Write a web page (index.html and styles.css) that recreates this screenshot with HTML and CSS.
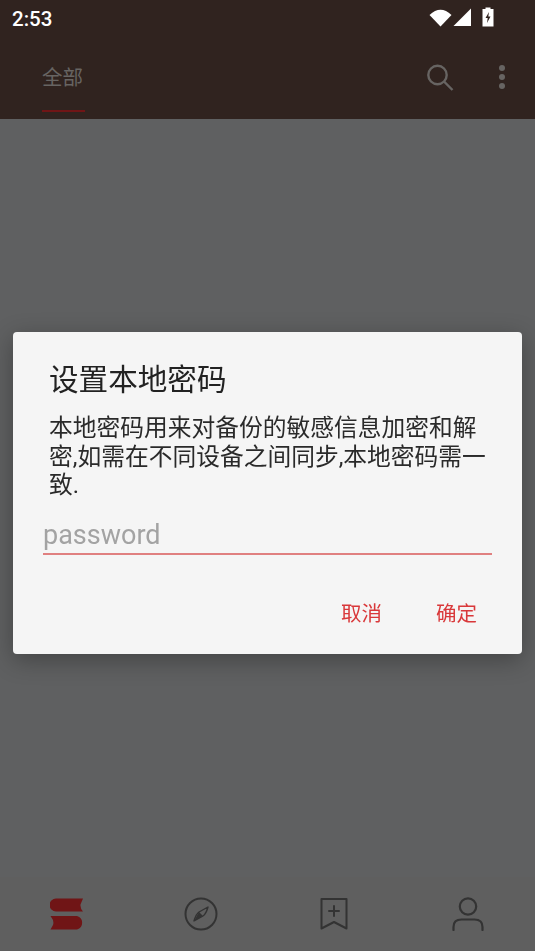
FILE: index.html
```html
<!DOCTYPE html>
<html lang="zh-CN">

<head>
    <meta charset="UTF-8">
    <meta name="viewport" content="width=device-width, initial-scale=1.0">
    <title>设置本地密码</title>
    <link rel="stylesheet" href="styles.css">
</head>
<body>
    <div class="app">
        <header class="app-header">
            <div class="status-bar">
                <span class="clock">2:53</span>
                <div class="status-icons">
                    <svg class="icon-wifi" width="23" height="19" viewBox="0 0 23 19"><path d="M0.5 7 Q11.5 -3.5 22.5 7 L11.5 18.5 Z" fill="#fff"/></svg>
                    <svg class="icon-signal" width="19" height="19" viewBox="0 0 19 19"><path d="M18 0.5 V18 H0.5 Z" fill="#fff"/></svg>
                    <svg class="icon-battery" width="12" height="20" viewBox="0 0 12 20"><path d="M3.5 0.5 H8.5 V2 H11.5 V19.5 H0.5 V2 H3.5 Z" fill="#fff"/><path d="M7 5 L3.5 11 H5.7 L5 16 L8.5 9.5 H6.3 Z" fill="#30231f"/></svg>
                </div>
            </div>
            <div class="toolbar">
                <div class="tab">
                    <span class="tab-label">全部</span>
                    <span class="tab-line"></span>
                </div>
                <div class="toolbar-actions">
                    <svg width="28" height="28" viewBox="0 0 28 28" fill="none" stroke="#676462" stroke-width="2.4"><circle cx="11.5" cy="11" r="9.2"/><path d="M18 17.5 L26.5 26"/></svg>
                    <div class="more-dots"><i></i><i></i><i></i></div>
                </div>
            </div>
        </header>
        <main class="content"></main>
        <nav class="bottom-nav">
            <svg width="34" height="32" viewBox="0 0 34 32"><path d="M6 0.5 H33 L30.5 6.5 Q30 10 33 13.5 H6 A6.5 6.5 0 0 1 6 0.5 Z M0.5 18 H27 A7 7 0 0 1 27 31.5 H0.5 L3 27 Q4.5 23 0.5 18 Z" fill="#701516"/></svg>
            <svg width="34" height="34" viewBox="0 0 34 34" fill="none" stroke="#333" stroke-width="2"><circle cx="17" cy="17" r="15.5"/><path d="M24 10 Q22 17 19 19 L10 24 Q12 17 15 15 Z" stroke-width="1.4" stroke-linejoin="round"/><path d="M15 15 L19 19 L10 24 Z" fill="#333" stroke="none"/></svg>
            <svg width="28" height="32" viewBox="0 0 28 32" fill="none" stroke="#333" stroke-width="2" stroke-linejoin="round" stroke-linecap="round"><path d="M1.5 1 H26.5 V30.5 L14 24 L1.5 30.5 Z"/><path d="M14 8 V18 M9 13 H19"/></svg>
            <svg width="32" height="34" viewBox="0 0 32 34" fill="none" stroke="#333" stroke-width="2.2" stroke-linecap="round"><circle cx="16" cy="9.5" r="8.2"/><path d="M1.5 33 V30 Q1.5 22.5 9.5 22.5 H22.5 Q30.5 22.5 30.5 30 V33"/></svg>
        </nav>
    </div>

    <div class="overlay">
        <div class="dialog">
            <h2 class="dialog-title">设置本地密码</h2>
            <p class="dialog-text">本地密码用来对备份的敏感信息加密和解密,如需在不同设备之间同步,本地密码需一致.</p>
            <input class="dialog-input" type="text" placeholder="password">
            <div class="dialog-buttons">
                <button>取消</button>
                <button>确定</button>
            </div>
        </div>
    </div>
</body>
</html>
```

FILE: styles.css
```css
* {
    box-sizing: border-box;
}

html, body {
    margin: 0;
    height: 100%;
}

body {
    font-family: "Roboto", "Noto Sans CJK SC", sans-serif;
    background-color: #5f6061;
    overflow: hidden;
}

.app {
    height: 951px;
    display: flex;
    flex-direction: column;
}

.app-header {
    background-color: #30231f;
    height: 119px;
}

.status-bar {
    height: 38px;
    padding: 7px 41px 0 12px;
    display: flex;
    justify-content: space-between;
}

.clock {
    color: #fff;
    font-size: 20.5px;
    font-weight: 500;
    line-height: 24px;
}

.status-icons {
    display: flex;
    align-items: flex-start;
    padding-top: 1px;
}

.icon-signal {
    margin-left: 1px;
}

.icon-battery {
    margin-left: 10px;
    margin-top: -1px;
}

.toolbar {
    height: 81px;
    padding-left: 41px;
    padding-right: 30px;
    display: flex;
    justify-content: space-between;
}

.tab {
    width: 44px;
    display: flex;
    flex-direction: column;
    align-items: flex-start;
}

.tab-label {
    color: #676462;
    font-size: 20.5px;
    line-height: 28px;
    margin-top: 26px;
    margin-left: 1px;
}

.tab-line {
    width: 43px;
    height: 2px;
    margin-top: 18px;
    margin-left: 1px;
    background-color: #701516;
}

.toolbar-actions {
    display: flex;
    align-items: flex-start;
    gap: 45px;
    padding-top: 26px;
}

.more-dots {
    display: flex;
    flex-direction: column;
    gap: 3px;
    padding-top: 1px;
}

.more-dots i {
    width: 6px;
    height: 6px;
    border-radius: 50%;
    background-color: #676462;
}

.content {
    flex: 1;
}

.bottom-nav {
    height: 74px;
    background-color: #5f5f5f;
    display: grid;
    grid-template-columns: repeat(4, 1fr);
    justify-items: center;
    align-items: center;
}

.overlay {
    position: fixed;
    inset: 0;
    display: flex;
    justify-content: center;
    align-items: flex-start;
    padding-top: 332px;
}

.dialog {
    width: 509px;
    height: 322px;
    padding: 27px 30px 0;
    background-color: #f5f5f5;
    border-radius: 4px;
    box-shadow: 0 6px 24px rgba(0, 0, 0, 0.3);
}

.dialog-title {
    margin: 0 0 0 6px;
    font-size: 29.6px;
    font-weight: normal;
    line-height: 42px;
    color: #222;
}

.dialog-text {
    margin: 13px 0 0 6px;
    width: 440px;
    font-size: 23.75px;
    line-height: 28.5px;
    color: #2a2a2a;
}

.dialog-input {
    display: block;
    width: 449px;
    height: 43px;
    margin-top: 12px;
    padding: 6px 0 0;
    border: none;
    border-bottom: 2px solid #e08080;
    background: transparent;
    font-family: "Roboto", sans-serif;
    font-size: 27px;
}

.dialog-input::placeholder {
    color: #a3a3a3;
    opacity: 1;
}

.dialog-buttons {
    display: flex;
    justify-content: flex-end;
    gap: 54px;
    margin-top: 43px;
    padding-right: 15px;
}

.dialog-buttons button {
    padding: 0;
    border: none;
    background: none;
    font-family: "Noto Sans CJK SC", sans-serif;
    font-size: 20.5px;
    line-height: 28px;
    color: #d9383a;
}
```
